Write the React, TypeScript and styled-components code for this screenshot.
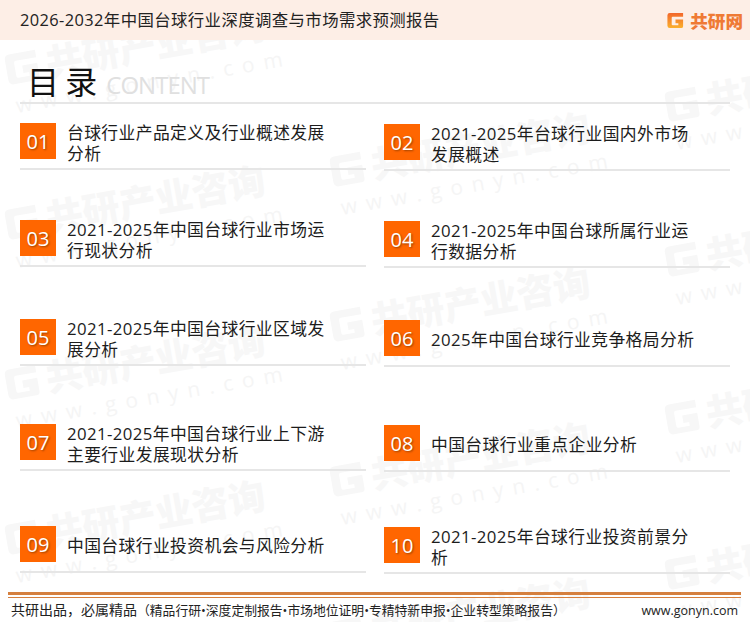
import React from "react";
import styled, { createGlobalStyle } from "styled-components";

const Global = createGlobalStyle`
  html, body { margin: 0; padding: 0; background: #fff; }
  body { font-family: "Open Sans", "Noto Sans CJK SC", sans-serif; }
`;
const Page = styled.div`
  position: relative; width: 750px; height: 622px; overflow: hidden; background: #fff;
  display: flex; flex-direction: column;
`;
const Header = styled.header`
  height: 40px; background: #fdeee6; display: flex; align-items: center; justify-content: space-between;
  padding: 0 7px 0 20px; flex: none; position: relative; z-index: 1;
`;
const ReportTitle = styled.h1`
  margin: 0; font-size: 16.4px; letter-spacing: .4px; font-weight: 400; color: #222; line-height: 40px;
`;
const Brand = styled.div`
  display: flex; align-items: center; gap: 5px; color: #ef7a35; font-weight: 900; font-size: 17.6px;
`;
const Watermarks = styled.div`
  position: absolute; inset: 0; pointer-events: none;
`;
const Mark = styled.div<{ $x: number; $y: number }>`
  position: absolute; left: ${p => p.$x}px; top: ${p => p.$y}px; width: 290px;
  transform: rotate(-10deg); transform-origin: left top; color: #f7f7f7;
`;
const MarkName = styled.div`
  display: flex; align-items: center; gap: 5px; font-size: 37px; font-weight: 900; line-height: 44px; white-space: nowrap;
`;
const MarkUrl = styled.div`
  font-size: 21px; letter-spacing: 9px; line-height: 28px; white-space: nowrap; margin-left: 6px; color: #f5f5f5;
`;
const Main = styled.main`
  position: relative; flex: 1; padding: 0 20px; display: flex; flex-direction: column;
`;
const Heading = styled.div`
  height: 64px; border-bottom: 2px solid #e6e6e6; display: flex; align-items: baseline; gap: 10px;
  padding: 16px 0 0 7px; box-sizing: border-box;
`;
const HeadingCn = styled.h2`
  margin: 0; font-size: 32px; line-height: 52px; font-weight: 400; color: #111; letter-spacing: -1px;
`;
const HeadingEn = styled.span`
  font-family: "Open Sans", sans-serif; font-size: 24px; letter-spacing: -1px; color: #e0e0e0;
`;
const Columns = styled.div`
  display: grid; grid-template-columns: 346px 346px; column-gap: 18px;
`;
const Column = styled.div<{ $top: number }>`
  display: grid; grid-template-rows: 66px 97px 99px 105px 102px; padding-top: ${p => p.$top}px;
`;
const Item = styled.div`
  display: flex; align-items: center; align-self: end; gap: 11px; height: 47px; box-sizing: border-box;
  border-bottom: 2px solid #e6e6e6; padding-bottom: 9px;
`;
const Badge = styled.div`
  flex: none; width: 36px; height: 36px; background: #ff6600; color: #fff; font-size: 20px;
  display: flex; align-items: center; justify-content: center; text-shadow: 1px 1px 2px rgba(90,40,0,.6);
`;
const ItemText = styled.div`
  font-size: 16.8px; letter-spacing: .4px; line-height: 21.5px; color: #1c1c1c; width: 270px; margin-top: 4px; flex: none;
`;
const Footer = styled.footer`
  position: absolute; left: 0; right: 0; bottom: 0; height: 30px; box-sizing: border-box;
`;
const Rule = styled.div`
  margin: 0 0 0 8px; width: 733px; height: 6px; border-top: 3px solid #d5803f; border-bottom: 1px solid #d5803f; box-sizing: border-box;
`;
const FooterRow = styled.div`
  display: flex; align-items: baseline; padding: 0 12px 0 11px; font-size: 12.8px; line-height: 24px; color: #222;
`;
const FooterLead = styled.span`
  font-size: 14px;
`;
const FooterUrl = styled.span`
  margin-left: auto; font-size: 12.5px;
`;

const left = [
  ["01", "台球行业产品定义及行业概述发展分析"],
  ["03", "2021-2025年中国台球行业市场运行现状分析"],
  ["05", "2021-2025年中国台球行业区域发展分析"],
  ["07", "2021-2025年中国台球行业上下游主要行业发展现状分析"],
  ["09", "中国台球行业投资机会与风险分析"],
];
const right = [
  ["02", "2021-2025年台球行业国内外市场发展概述"],
  ["04", "2021-2025年中国台球所属行业运行数据分析"],
  ["06", "2025年中国台球行业竞争格局分析"],
  ["08", "中国台球行业重点企业分析"],
  ["10", "2021-2025年台球行业投资前景分析"],
];
const marks: [number, number][] = [
  [0, 49], [0, 204], [0, 364], [0, 519],
  [325, 151], [325, 306], [325, 461], [325, 616],
  [660, 86], [660, 241], [660, 399], [660, 554],
];

const G_PATH = "M4 2h14v4H7a1 1 0 0 0-1 1v7a1 1 0 0 0 1 1h6v-2h-3V9h8v7a2 2 0 0 1-2 2H4a2.5 2.5 0 0 1-2.5-2.5v-11A2.5 2.5 0 0 1 4 2z";

const Logo = ({ size, fill }: { size: number; fill: string }) => (
  <svg width={size} height={size} viewBox="0 0 20 20" aria-hidden="true" style={{ flex: "none" }}>
    <defs>
      <linearGradient id="brand" x1="0" y1="0" x2="0" y2="1">
        <stop offset="0" stopColor="#f2662b" />
        <stop offset="1" stopColor="#fbb02d" />
      </linearGradient>
    </defs>
    <path fill={fill} d={G_PATH} />
  </svg>
);

const renderItems = (list: string[][]) =>
  list.map(([n, t]) => (
    <Item key={n}>
      <Badge>{n}</Badge>
      <ItemText>{t}</ItemText>
    </Item>
  ));

export default function App() {
  return (
    <Page>
      <Global />
      <Watermarks>
        {marks.map(([x, y], i) => (
          <Mark key={i} $x={x} $y={y}>
            <MarkName><Logo size={38} fill="#f7f7f7" />共研产业咨询</MarkName>
            <MarkUrl>www.gonyn.com</MarkUrl>
          </Mark>
        ))}
      </Watermarks>
      <Header>
        <ReportTitle>2026-2032年中国台球行业深度调查与市场需求预测报告</ReportTitle>
        <Brand><Logo size={19} fill="url(#brand)" />共研网</Brand>
      </Header>
      <Main>
        <Heading>
          <HeadingCn>目 录</HeadingCn>
          <HeadingEn>CONTENT</HeadingEn>
        </Heading>
        <Columns>
          <Column $top={0}>{renderItems(left)}</Column>
          <Column $top={1}>{renderItems(right)}</Column>
        </Columns>
      </Main>
      <Footer>
        <Rule />
        <FooterRow>
          <FooterLead>共研出品，必属精品</FooterLead>
          <span>（精品行研•深度定制报告•市场地位证明•专精特新申报•企业转型策略报告）</span>
          <FooterUrl>www.gonyn.com</FooterUrl>
        </FooterRow>
      </Footer>
    </Page>
  );
}
